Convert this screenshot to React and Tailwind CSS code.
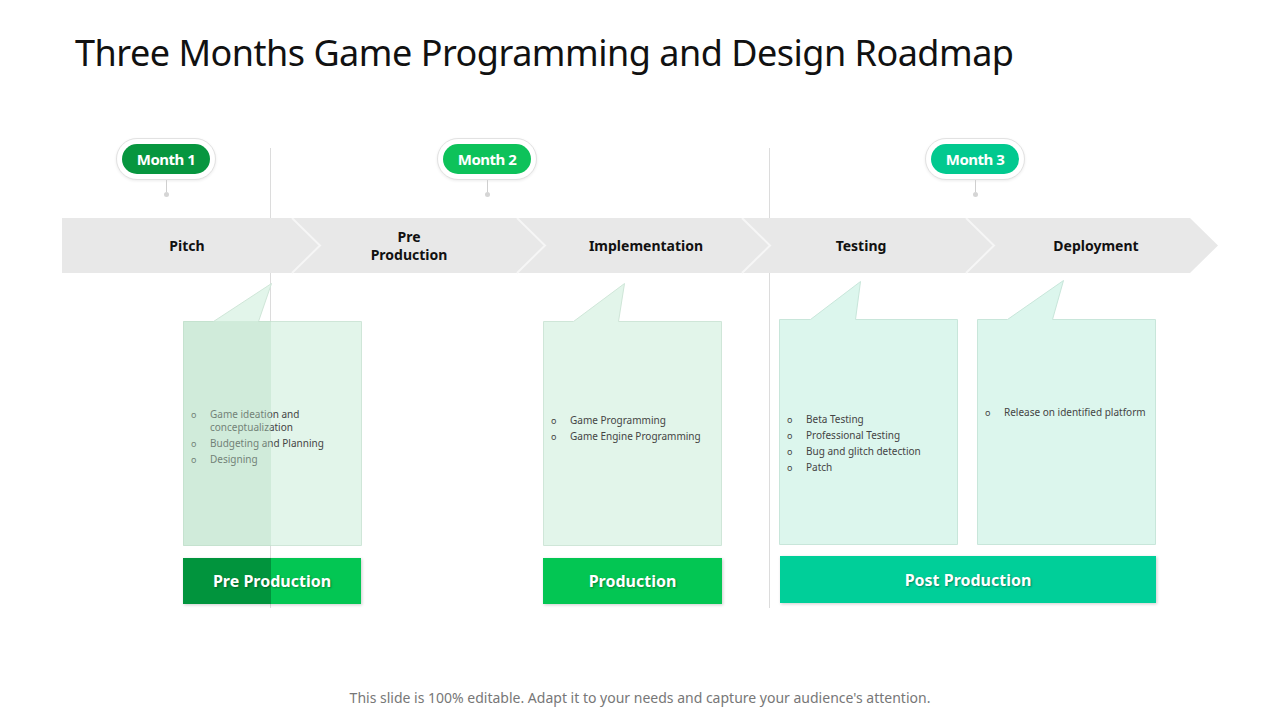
const months = [
  { label: "Month 1", x: 166, color: "bg-[#07963f]" },
  { label: "Month 2", x: 487, color: "bg-[#0dc25a]" },
  { label: "Month 3", x: 975, color: "bg-[#02c98f]" },
];

const stages = [
  { label: "Pitch", cx: 187 },
  { label: "Pre\nProduction", cx: 409 },
  { label: "Implementation", cx: 646 },
  { label: "Testing", cx: 861 },
  { label: "Deployment", cx: 1096 },
];

const cards = [
  { x: 183, y: 321, h: 224, tail: [213, 258, 271, 283], fill: "#e2f5ea", stroke: "#cfe6d8", top: 87, items: ["Game ideation and conceptualization", "Budgeting and Planning", "Designing"] },
  { x: 543, y: 321, h: 224, tail: [573, 618, 624, 283], fill: "#e2f5ea", stroke: "#cfe6d8", top: 93, items: ["Game Programming", "Game Engine Programming"] },
  { x: 779, y: 319, h: 225, tail: [810, 855, 860, 281], fill: "#dcf6ed", stroke: "#c8e6da", top: 94, items: ["Beta Testing", "Professional Testing", "Bug and glitch detection", "Patch"] },
  { x: 977, y: 319, h: 225, tail: [1007, 1052, 1063, 280], fill: "#dcf6ed", stroke: "#c8e6da", top: 87, items: ["Release on identified platform"] },
];

function Card({ c }) {
  const [b1, b2, ax, ay] = c.tail;
  const w = 178;
  const top = c.y - ay;
  const pts = `0,${top} ${b1 - c.x},${top} ${ax - c.x},0 ${b2 - c.x},${top} ${w},${top} ${w},${top + c.h} 0,${top + c.h}`;
  return (
    <div className="absolute" style={{ left: c.x, top: ay, width: w + 1, height: top + c.h + 1 }}>
      <svg width={w + 1} height={top + c.h + 1} className="absolute inset-0">
        <polygon points={pts} transform="translate(0.5,0.5)" fill={c.fill} stroke={c.stroke} />
      </svg>
      <ul className="absolute left-[8px] right-2 flex flex-col gap-[3px] text-[10px] leading-[13px] text-[#444]" style={{ top: top + c.top }}>
        {c.items.map((it) => (
          <li key={it} className="flex">
            <span className="w-[19px] shrink-0 text-[9px]">o</span>
            <span>{it}</span>
          </li>
        ))}
      </ul>
    </div>
  );
}

export default function App() {
  return (
    <div className="relative w-[1280px] h-[720px] bg-white overflow-hidden font-['Liberation_Sans',Arial,sans-serif]">
      <h1 className="absolute left-[75px] top-[26px] text-[36px] text-[#111] font-['DejaVu_Serif','Liberation_Serif',serif] tracking-[-0.5px]">
        Three Months Game Programming and Design Roadmap
      </h1>

      {/* vertical guide lines */}
      <div className="absolute left-[270px] top-[148px] w-px h-[460px] bg-[#dcdcdc]" />
      <div className="absolute left-[769px] top-[148px] w-px h-[460px] bg-[#dcdcdc]" />

      {/* month pills */}
      {months.map((m) => (
        <div key={m.label} className="absolute flex flex-col items-center" style={{ left: m.x - 51, top: 138, width: 102 }}>
          <div className="rounded-full border border-[#e2e2e2] bg-white p-[5px] shadow-[0_1px_3px_rgba(0,0,0,0.08)]">
            <div className={`${m.color} rounded-full w-[88px] h-[30px] flex items-center justify-center text-white font-bold text-[15px] font-['DejaVu_Serif','Liberation_Serif',serif] tracking-[-0.5px]`}>
              {m.label}
            </div>
          </div>
          <div className="w-px h-[12px] bg-[#cfcfcf]" />
          <div className="w-[5px] h-[5px] rounded-full bg-[#d5d5d5]" />
        </div>
      ))}

      {/* arrow bar */}
      <svg className="absolute left-[62px] top-[218px]" width="1160" height="56">
        <polygon points="0,0 1128,0 1156,27.5 1128,55 0,55" fill="#e8e8e8" />
        {[230, 455, 680, 904].map((x) => (
          <polyline key={x} points={`${x},0 ${x + 28},27.5 ${x},55`} fill="none" stroke="#f6f6f6" strokeWidth="2" />
        ))}
      </svg>
      {stages.map((s) => (
        <div key={s.label} className="absolute top-[218px] h-[55px] w-[160px] flex items-center justify-center text-center text-[14px] leading-[18px] font-bold text-[#111] whitespace-pre-line" style={{ left: s.cx - 80 }}>
          {s.label}
        </div>
      ))}

      {cards.map((c, i) => (
        <Card key={i} c={c} />
      ))}

      {/* darker overlay band on first column */}
      <div className="absolute left-[183px] top-[321px] w-[88px] h-[225px] bg-[#b6dcc4]/40" />

      {/* phase buttons */}
      <div className="absolute left-[183px] top-[558px] w-[178px] h-[46px] bg-[#03c653] shadow-[1px_1px_3px_rgba(0,0,0,0.2)] flex items-center justify-center overflow-hidden">
        <div className="absolute left-0 top-0 w-[88px] h-full bg-[#01943d]" />
        <span className="relative text-white font-bold text-[16px] [text-shadow:1px_1px_2px_rgba(0,0,0,0.35)]">Pre Production</span>
      </div>
      <div className="absolute left-[543px] top-[558px] w-[179px] h-[46px] bg-[#03c653] shadow-[1px_1px_3px_rgba(0,0,0,0.2)] flex items-center justify-center">
        <span className="text-white font-bold text-[16px] [text-shadow:1px_1px_2px_rgba(0,0,0,0.35)]">Production</span>
      </div>
      <div className="absolute left-[780px] top-[556px] w-[376px] h-[47px] bg-[#00cf99] shadow-[1px_1px_3px_rgba(0,0,0,0.2)] flex items-center justify-center">
        <span className="text-white font-bold text-[16px] [text-shadow:1px_1px_2px_rgba(0,0,0,0.35)]">Post Production</span>
      </div>

      <p className="absolute left-0 right-0 top-[687px] text-center text-[14px] text-[#777]">
        This slide is 100% editable. Adapt it to your needs and capture your audience's attention.
      </p>
    </div>
  );
}
